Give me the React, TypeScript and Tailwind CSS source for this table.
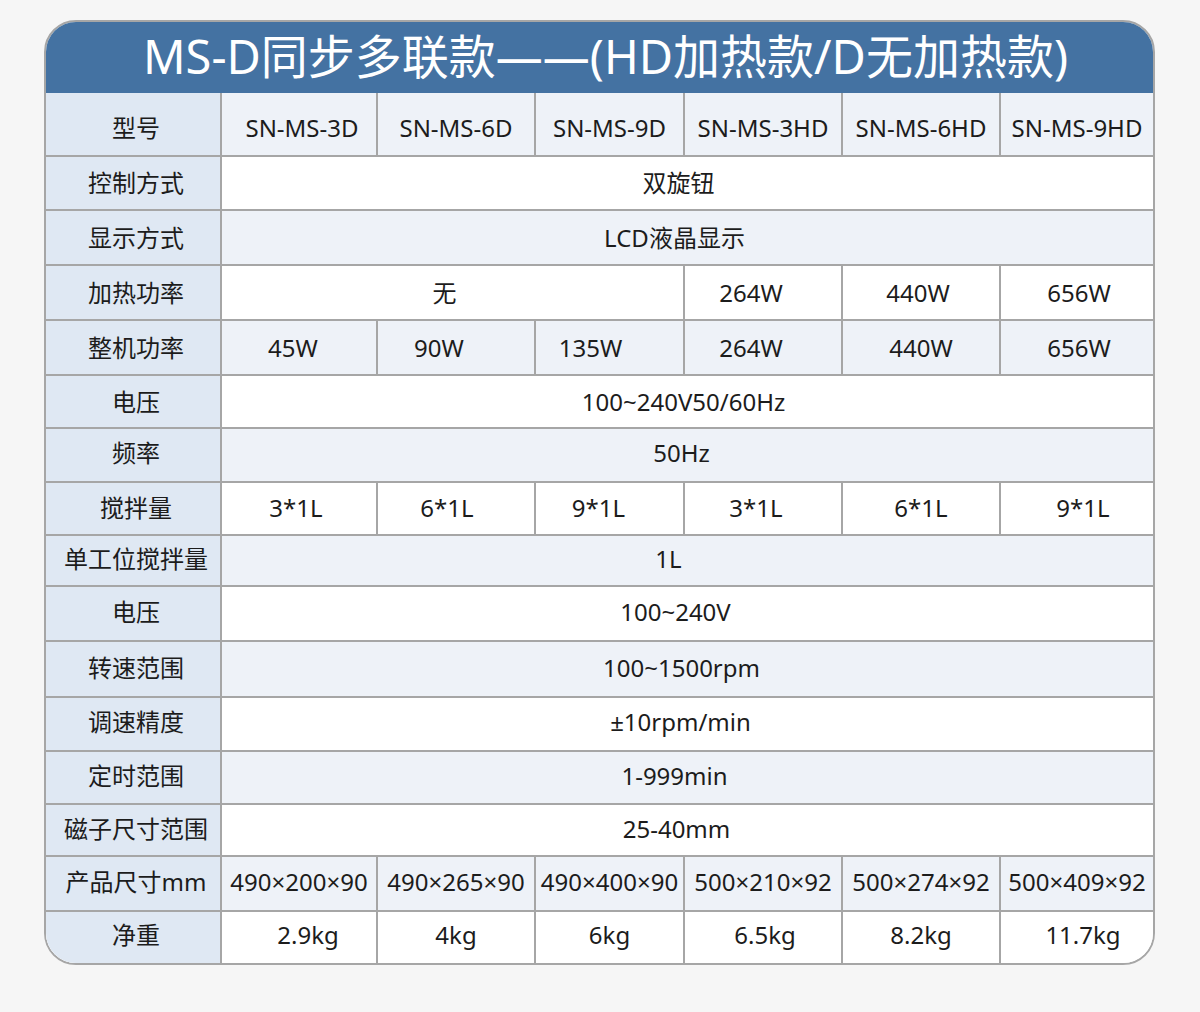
type Cell = { text: string; span?: number; shift?: string };
type Row = { label: string; h: string; pad: string; cells: Cell[] };

// the source picture centres its cells a little unevenly, shift classes follow it
const rows: Row[] = [
  {
    label: "型号",
    h: "h-[62px]",
    pad: "pt-[7px]",
    cells: [
      { text: "SN-MS-3D", shift: "pl-[6px]" },
      { text: "SN-MS-6D" },
      { text: "SN-MS-9D" },
      { text: "SN-MS-3HD" },
      { text: "SN-MS-6HD" },
      { text: "SN-MS-9HD" },
    ],
  },
  { label: "控制方式", h: "h-[54px]", pad: "pt-0", cells: [{ text: "双旋钮", span: 6, shift: "pr-[18px]" }] },
  { label: "显示方式", h: "h-[55px]", pad: "pt-0", cells: [{ text: "LCD液晶显示", span: 6, shift: "pr-[26px]" }] },
  {
    label: "加热功率",
    h: "h-[55px]",
    pad: "pt-0",
    cells: [
      { text: "无", span: 3, shift: "pr-[16px]" },
      { text: "264W", shift: "pr-[24px]" },
      { text: "440W", shift: "pr-[6px]" },
      { text: "656W", shift: "pl-[4px]" },
    ],
  },
  {
    label: "整机功率",
    h: "h-[55px]",
    pad: "pt-0",
    cells: [
      { text: "45W", shift: "pr-[12px]" },
      { text: "90W", shift: "pr-[34px]" },
      { text: "135W", shift: "pr-[38px]" },
      { text: "264W", shift: "pr-[24px]" },
      { text: "440W" },
      { text: "656W", shift: "pl-[4px]" },
    ],
  },
  { label: "电压", h: "h-[53px]", pad: "pt-0", cells: [{ text: "100~240V50/60Hz", span: 6, shift: "pr-[8px]" }] },
  { label: "频率", h: "h-[54px]", pad: "pb-[4px]", cells: [{ text: "50Hz", span: 6, shift: "pr-[12px]" }] },
  {
    label: "搅拌量",
    h: "h-[53px]",
    pad: "pb-[2px]",
    cells: [
      { text: "3*1L", shift: "pr-[6px]" },
      { text: "6*1L", shift: "pr-[18px]" },
      { text: "9*1L", shift: "pr-[22px]" },
      { text: "3*1L", shift: "pr-[14px]" },
      { text: "6*1L" },
      { text: "9*1L", shift: "pl-[12px]" },
    ],
  },
  { label: "单工位搅拌量", h: "h-[51px]", pad: "pb-[4px]", cells: [{ text: "1L", span: 6, shift: "pr-[38px]" }] },
  { label: "电压", h: "h-[55px]", pad: "pb-[4px]", cells: [{ text: "100~240V", span: 6, shift: "pr-[24px]" }] },
  { label: "转速范围", h: "h-[56px]", pad: "pb-[3px]", cells: [{ text: "100~1500rpm", span: 6, shift: "pr-[12px]" }] },
  { label: "调速精度", h: "h-[54px]", pad: "pb-[4px]", cells: [{ text: "±10rpm/min", span: 6, shift: "pr-[14px]" }] },
  { label: "定时范围", h: "h-[53px]", pad: "pb-[3px]", cells: [{ text: "1-999min", span: 6, shift: "pr-[26px]" }] },
  { label: "磁子尺寸范围", h: "h-[52px]", pad: "pb-[3px]", cells: [{ text: "25-40mm", span: 6, shift: "pr-[22px]" }] },
  {
    label: "产品尺寸mm",
    h: "h-[55px]",
    pad: "pb-[4px]",
    cells: [
      { text: "490×200×90" },
      { text: "490×265×90" },
      { text: "490×400×90" },
      { text: "500×210×92" },
      { text: "500×274×92" },
      { text: "500×409×92" },
    ],
  },
  {
    label: "净重",
    h: "h-[53px]",
    pad: "pb-[5px]",
    cells: [
      { text: "2.9kg", shift: "pl-[18px]" },
      { text: "4kg" },
      { text: "6kg" },
      { text: "6.5kg", shift: "pl-[4px]" },
      { text: "8.2kg" },
      { text: "11.7kg", shift: "pl-[12px]" },
    ],
  },
];

const spanClass: Record<number, string> = {
  1: "col-span-1",
  3: "col-span-3",
  6: "col-span-6",
};

export default function App() {
  return (
    <div className="h-[1012px] w-[1200px] bg-[#f6f6f6] pt-[20px] pl-[44px] font-['Noto_Sans','Noto_Sans_CJK_SC',sans-serif] text-[#1c1c1c]">
      <div className="w-[1111px] overflow-hidden rounded-[32px] border-2 border-[#a6a6a6] bg-white">
        <div className="flex h-[71px] items-center justify-center bg-[#4472a2] pl-[12px] pb-[2px] text-[47px] leading-none text-white">
          MS-D同步多联款——(HD加热款/D无加热款)
        </div>
        {rows.map((row, i) => (
          <div
            key={i}
            className={`grid grid-cols-[174px_156px_158px_149px_158px_158px_154px] ${row.h} ${
              i > 0 ? "border-t-2 border-[#a6a6a6]" : ""
            } ${i % 2 === 0 ? "bg-[#eef2f8]" : "bg-white"}`}
          >
            <div className={`flex items-center justify-center bg-[#dfe8f3] pl-[6px] ${row.pad} text-[24px] leading-none`}>
              {row.label}
            </div>
            {row.cells.map((c, j) => (
              <div
                key={j}
                className={`${spanClass[c.span ?? 1]} flex items-center justify-center border-l-2 border-[#a6a6a6] ${row.pad} ${
                  c.shift ?? ""
                } text-[24px] leading-none`}
              >
                {c.text}
              </div>
            ))}
          </div>
        ))}
      </div>
    </div>
  );
}
